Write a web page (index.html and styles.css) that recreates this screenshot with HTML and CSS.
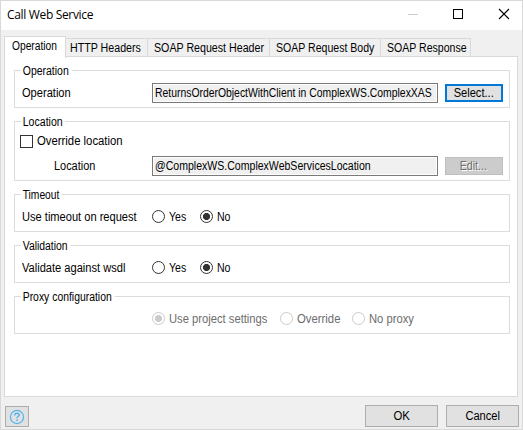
FILE: index.html
```html
<!DOCTYPE html>
<html lang="en">
<head>
<meta charset="utf-8">
<title>Call Web Service</title>
<link rel="stylesheet" href="styles.css">
</head>
<body>
<div class="window">
  <header class="titlebar">
    <h1>Call Web Service</h1>
    <svg class="controls" width="104" height="12" viewBox="0 0 104 12" fill="none" shape-rendering="crispEdges">
      <path d="M0 6.5H10" stroke="#ccc"/>
      <rect x="45.5" y="1.5" width="9" height="9" stroke="#000"/>
      <path d="M91 1l10 10M101 1l-10 10" stroke="#000" stroke-width="1.1" shape-rendering="auto"/>
    </svg>
  </header>
  <nav class="tabs">
    <div class="tab active"><span class="text w85">Operation</span></div>
    <div class="tab headers"><span class="text w89">HTTP Headers</span></div>
    <div class="tab reqhead"><span class="text w89">SOAP Request Header</span></div>
    <div class="tab reqbody"><span class="text w88">SOAP Request Body</span></div>
    <div class="tab response"><span class="text w88">SOAP Response</span></div>
  </nav>
  <main class="page">
    <section class="group">
      <h2 class="text w87">Operation</h2>
      <div class="row">
        <span class="label"><span class="text w92">Operation</span></span>
        <div class="field"><span class="text w865">ReturnsOrderObjectWithClient in ComplexWS.ComplexXAS</span></div>
        <button class="small focused"><span class="text w92">Select...</span></button>
      </div>
    </section>
    <section class="group tall">
      <h2 class="text w88">Location</h2>
      <div class="check"><i class="box"></i><span class="text w94">Override location</span></div>
      <div class="row">
        <span class="label indent"><span class="text w91">Location</span></span>
        <div class="field"><span class="text w88">@ComplexWS.ComplexWebServicesLocation</span></div>
        <button class="small" disabled><span class="text w89">Edit...</span></button>
      </div>
    </section>
    <section class="group">
      <h2 class="text w85">Timeout</h2>
      <div class="row">
        <span class="label"><span class="text w92">Use timeout on request</span></span>
        <span class="radio yes"><i></i><span class="text w88">Yes</span></span>
        <span class="radio on"><i></i><span class="text w88">No</span></span>
      </div>
    </section>
    <section class="group">
      <h2 class="text w865">Validation</h2>
      <div class="row">
        <span class="label"><span class="text w92">Validate against wsdl</span></span>
        <span class="radio yes"><i></i><span class="text w88">Yes</span></span>
        <span class="radio on"><i></i><span class="text w88">No</span></span>
      </div>
    </section>
    <section class="group">
      <h2 class="text w865">Proxy configuration</h2>
      <div class="row">
        <span class="label"></span>
        <span class="radio off on project"><i></i><span class="text w93">Use project settings</span></span>
        <span class="radio off over"><i></i><span class="text w94">Override</span></span>
        <span class="radio off"><i></i><span class="text w93">No proxy</span></span>
      </div>
    </section>
  </main>
  <footer class="footer">
    <button class="help" aria-label="Help">
      <svg width="16" height="16" viewBox="0 0 16 16" fill="none" stroke="#54b4ef" stroke-width="1.2"><circle cx="8" cy="8" r="6.6"/><path d="M5.8 6.5V6a2.2 1.8 0 0 1 4.4 0c0 1.5-2.2 1.5-2.2 3.2M8 10.4v1.6" stroke-width="1.5"/></svg>
    </button>
    <button class="big"><span class="text w94">OK</span></button>
    <button class="big"><span class="text w92">Cancel</span></button>
  </footer>
</div>
</body>
</html>
```
FILE: styles.css
```css
* { box-sizing: border-box; }
body {
  margin: 0;
  font: 12px/14px "Liberation Sans", Arial, sans-serif;
  color: #000;
}
h1, h2 { margin: 0; font-weight: normal; font-size: inherit; }
button { font: inherit; padding: 0; margin: 0; border-radius: 0; color: #000; }

/* Condensed label text */
.text { display: inline-block; white-space: nowrap; transform-origin: left center; }
button .text { transform-origin: center; }
.w85 { transform: scaleX(.853); }
.w865 { transform: scaleX(.866); }
.w87 { transform: scaleX(.873); }
.w88 { transform: scaleX(.879); }
.w89 { transform: scaleX(.888); }
.w91 { transform: scaleX(.91); }
.w92 { transform: scaleX(.924); }
.w93 { transform: scaleX(.934); }
.w94 { transform: scaleX(.944); }

.window {
  width: 523px;
  height: 430px;
  border: 1px solid #d9d9d9;
  background: #f0f0f0;
  display: flex;
  flex-direction: column;
}
.titlebar {
  height: 29px;
  flex: none;
  background: #fff;
  display: flex;
  justify-content: space-between;
  padding: 7px 10px 0 6px;
}
.titlebar h1 { font: 12px/14px "Open Sans", sans-serif; letter-spacing: -0.33px; }

.tabs { display: flex; align-items: flex-end; height: 27px; flex: none; padding-left: 3px; }
.tab {
  height: 19px;
  border: 1px solid #d9d9d9;
  border-left: 0;
  border-bottom: 0;
  padding: 2px 0 0 4px;
}
.tab.active {
  width: 62px;
  height: 22px;
  border-left: 1px solid #d9d9d9;
  background: #fff;
  padding: 2px 0 0 7px;
  margin-bottom: -1px;
  position: relative;
  z-index: 1;
}
.tab.headers { width: 82px; }
.tab.reqhead { width: 122px; padding-left: 6px; }
.tab.reqbody { width: 111px; padding-left: 6px; }
.tab.response { width: 90px; padding-left: 6px; }

.page {
  width: 514px;
  height: 341px;
  margin-left: 3px;
  margin-top: -1px;
  border: 1px solid #d9d9d9;
  background: #fff;
  padding: 13px 7px 0 9px;
  flex: none;
}
.group {
  width: 496px;
  height: 38px;
  border: 1px solid #dcdcdc;
  margin-bottom: 13px;
  padding: 0 0 0 6px;
}
.group.tall { height: 60px; }
.group h2 {
  display: block;
  width: max-content;
  height: 12px;
  line-height: 14px;
  margin-top: -7px;
  padding: 0 3px 0 2px;
  background: #fff;
}
.row { display: flex; align-items: center; height: 20px; margin-top: 7px; }
.label { width: 131px; flex: none; padding-left: 1px; }
.label.indent { padding-left: 33px; }
.check { display: flex; align-items: flex-start; height: 14px; margin: 8px 0 0 -1px; }
.check .text { margin-top: -1px; }
.box { width: 13px; height: 13px; border: 1px solid #333; margin-right: 4px; }
.field {
  width: 286px;
  height: 20px;
  border: 1px solid #7a7a7a;
  background: #f0f0f0;
  box-shadow: inset 0 0 0 1px #fff;
  padding: 2px;
}
.small {
  width: 58px;
  height: 18px;
  margin-left: 7px;
  border: 1px solid #bfbfbf;
  background: #ccc;
  line-height: 14px;
}
.small.focused { border: 2px solid #0078d7; background: #e1e1e1; }
.small:disabled { color: #6d6d6d; text-shadow: 1px 1px #fff; padding-right: 1px; }

.radio { display: flex; align-items: flex-start; height: 14px; }
.radio i {
  width: 13px;
  height: 13px;
  border: 1px solid #333;
  border-radius: 50%;
  margin-right: 4px;
  background: #fff;
}
.radio.on i { background: radial-gradient(circle, #333 3.2px, #fff 3.9px); }
.radio.off { color: #6d6d6d; }
.radio.off i { border-color: #ccc; }
.radio.off.on i { background: radial-gradient(circle, #ccc 3.2px, #fff 3.9px); }
.yes { width: 48px; }
.project { width: 128px; }
.over { width: 72px; }

.footer { display: flex; align-items: flex-start; padding: 8px 0 0 4px; }
.help {
  width: 24px;
  height: 21px;
  margin: 1px 336px 0 0;
  border: 1px solid #adadad;
  background: #e1e1e1;
  display: flex;
  align-items: center;
  justify-content: center;
}
.big {
  width: 73px;
  height: 22px;
  margin-right: 8px;
  flex: none;
  border: 1px solid #adadad;
  background: #e1e1e1;
}
.big:last-child { margin-right: 0; }
```
